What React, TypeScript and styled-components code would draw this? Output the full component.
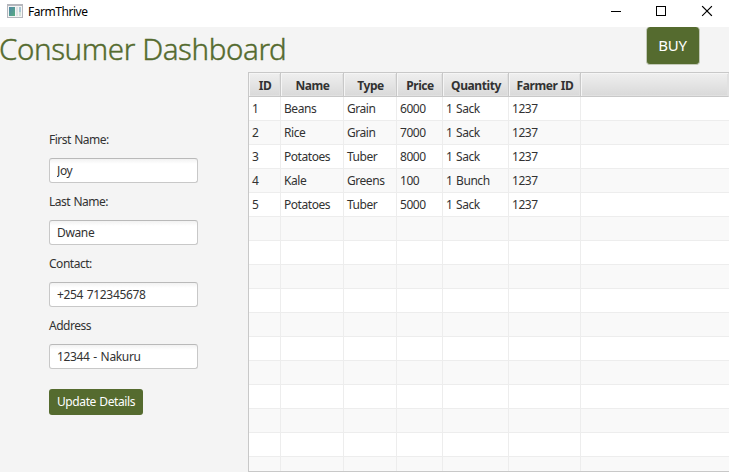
import React from "react";
import styled, { createGlobalStyle } from "styled-components";

const GlobalStyle = createGlobalStyle`
  * { box-sizing: border-box; }
  body { margin: 0; overflow: hidden; font-family: "Noto Sans", "Open Sans", sans-serif; font-size: 12px; color: #323232; }
`;

const Window = styled.div`
  display: flex;
  flex-direction: column;
  width: 729px;
  height: 472px;
  background: #f4f4f4;
  overflow: hidden;
  white-space: nowrap;
`;

const TitleBar = styled.header`
  display: flex;
  align-items: flex-start;
  justify-content: space-between;
  height: 27px;
  background: #fff;
`;

const AppName = styled.div`
  display: flex;
  gap: 5px;
  padding: 4px 0 0 7px;
  color: #000;
  line-height: 16px;
  letter-spacing: -0.46px;
`;

const Controls = styled.div`
  display: flex;
  svg { display: block; }
`;

const Banner = styled.div`
  display: flex;
  justify-content: space-between;
  align-items: flex-start;
  height: 45px;
  padding-right: 29px;
`;

const Heading = styled.h1`
  margin: 0 0 0 -1px;
  padding-top: 1px;
  color: #556b2f;
  font-size: 29.5px;
  font-weight: 300;
  line-height: 42px;
  letter-spacing: -0.4px;
  -webkit-text-stroke: 0.4px #556b2f;
`;

const Button = styled.button<{ $large?: boolean }>`
  width: ${(p) => (p.$large ? 54 : 94)}px;
  height: ${(p) => (p.$large ? 38 : 26)}px;
  padding: ${(p) => (p.$large ? "0 1px 1px 0" : "0")};
  border: ${(p) => (p.$large ? "1px solid #c3c9b8" : "0")};
  border-top: 0;
  border-radius: ${(p) => (p.$large ? 4 : 3)}px;
  background: #556b2f;
  color: #fff;
  font-family: inherit;
  font-size: ${(p) => (p.$large ? 15 : 12)}px;
  line-height: 24px;
  letter-spacing: ${(p) => (p.$large ? -0.2 : -0.4)}px;
  word-spacing: ${(p) => (p.$large ? 0 : 0.6)}px;
`;

const Content = styled.main`
  display: flex;
  height: 400px;
`;

const Form = styled.form`
  width: 248px;
  padding: 59px 50px 0 49px;
`;

const Field = styled.label`
  display: block;
  height: 62px;
  line-height: 18px;
  letter-spacing: -0.48px;
  word-spacing: 0.6px;
`;

const Input = styled.input`
  display: block;
  width: 149px;
  height: 25px;
  margin-top: 9px;
  padding: 0 7px 0 7px;
  border: 1px solid #c8c8c8;
  border-top-color: #b9b9b9;
  border-radius: 3px;
  outline: 0;
  background: linear-gradient(#f2f2f2, #fff 5px);
  color: #323232;
  font-family: inherit;
  font-size: 12px;
  letter-spacing: -0.35px;
  word-spacing: 1px;
`;

const Submit = styled.div`
  padding-top: 10px;
`;

const Table = styled.section`
  display: flex;
  flex-direction: column;
  width: 481px;
  height: 400px;
  border: 1px solid #c8c8c8;
  border-right: 0;
  background: #fff;
  overflow: hidden;
`;

const Row = styled.div<{ $odd?: boolean }>`
  display: grid;
  grid-template-columns: 32px 63px 53px 46px 66px 72px 1fr;
  flex: 0 0 24px;
  background: ${(p) => (p.$odd ? "#f9f9f9" : "#fff")};
`;

const HeadCell = styled.div`
  height: 24px;
  padding-left: 1px;
  border-right: 1px solid #c8c8c8;
  border-bottom: 1px solid #c8c8c8;
  background: linear-gradient(#efefef, #d9d9d9);
  box-shadow: inset 1px 1px #f5f5f5, inset -1px -1px #e1e1e1;
  color: #323232;
  font-weight: 700;
  line-height: 25px;
  text-align: center;
  letter-spacing: -0.42px;
  word-spacing: 0.6px;
  &:last-child { border-right-color: #e1e1e1; }
`;

const Cell = styled.div`
  height: 24px;
  padding-left: 3px;
  border-right: 1px solid #ededed;
  border-bottom: 1px solid #ededed;
  line-height: 23px;
  letter-spacing: -0.45px;
  word-spacing: 1px;
  &:last-child { border-right: 0; }
`;

const columns = ["ID", "Name", "Type", "Price", "Quantity", "Farmer ID", ""];
const produce = [
  ["1", "Beans", "Grain", "6000", "1 Sack", "1237"],
  ["2", "Rice", "Grain", "7000", "1 Sack", "1237"],
  ["3", "Potatoes", "Tuber", "8000", "1 Sack", "1237"],
  ["4", "Kale", "Greens", "100", "1 Bunch", "1237"],
  ["5", "Potatoes", "Tuber", "5000", "1 Sack", "1237"],
];
const fields = [
  ["First Name:", "Joy"],
  ["Last Name:", "Dwane"],
  ["Contact:", "+254 712345678"],
  ["Address", "12344 - Nakuru"],
];

const AppIcon = () => (
  <svg width="16" height="16" viewBox="0 0 16 16" shapeRendering="crispEdges">
    <defs>
      <linearGradient id="pane" x1="0" y1="0" x2="1" y2="1">
        <stop offset="0" stopColor="#5087a8" />
        <stop offset="1" stopColor="#58ac80" />
      </linearGradient>
    </defs>
    <path fill="#b5b7bd" d="M0 0h16v14H0z" />
    <path fill="#f5f5f5" d="M1 2h14v11H1z" />
    <path fill="url(#pane)" d="M2 3h6v9H2z" />
    <path fill="#e0e3e5" d="M9 3h2v9H9z" />
    <path fill="#a9c7d4" d="M12 3h2v5h-2z" />
    <path fill="#d1e2d9" d="M12 8h2v4h-2z" />
  </svg>
);

export default function App() {
  return (
    <>
      <GlobalStyle />
      <Window>
        <TitleBar>
          <AppName><AppIcon /><span>FarmThrive</span></AppName>
          <Controls>
            <svg width="138" height="27" fill="none" stroke="#000">
              <path d="M20 11.5h10M65.5 6.5h9v9h-9z" shapeRendering="crispEdges" />
              <path d="M111.5 6.5l9 9M120.5 6.5l-9 9" strokeWidth="1.1" strokeLinecap="square" />
            </svg>
          </Controls>
        </TitleBar>
        <Banner>
          <Heading>Consumer Dashboard</Heading>
          <Button $large>BUY</Button>
        </Banner>
        <Content>
          <Form onSubmit={(e) => e.preventDefault()}>
            {fields.map(([label, value]) => (
              <Field key={label}>{label}<Input defaultValue={value} /></Field>
            ))}
            <Submit><Button>Update Details</Button></Submit>
          </Form>
          <Table>
            <Row>{columns.map((c) => <HeadCell key={c}>{c}</HeadCell>)}</Row>
            {Array.from({ length: 16 }, (_, r) => (
              <Row key={r} $odd={r % 2 === 1}>
                {columns.map((c, i) => <Cell key={c}>{produce[r]?.[i]}</Cell>)}
              </Row>
            ))}
          </Table>
        </Content>
      </Window>
    </>
  );
}
